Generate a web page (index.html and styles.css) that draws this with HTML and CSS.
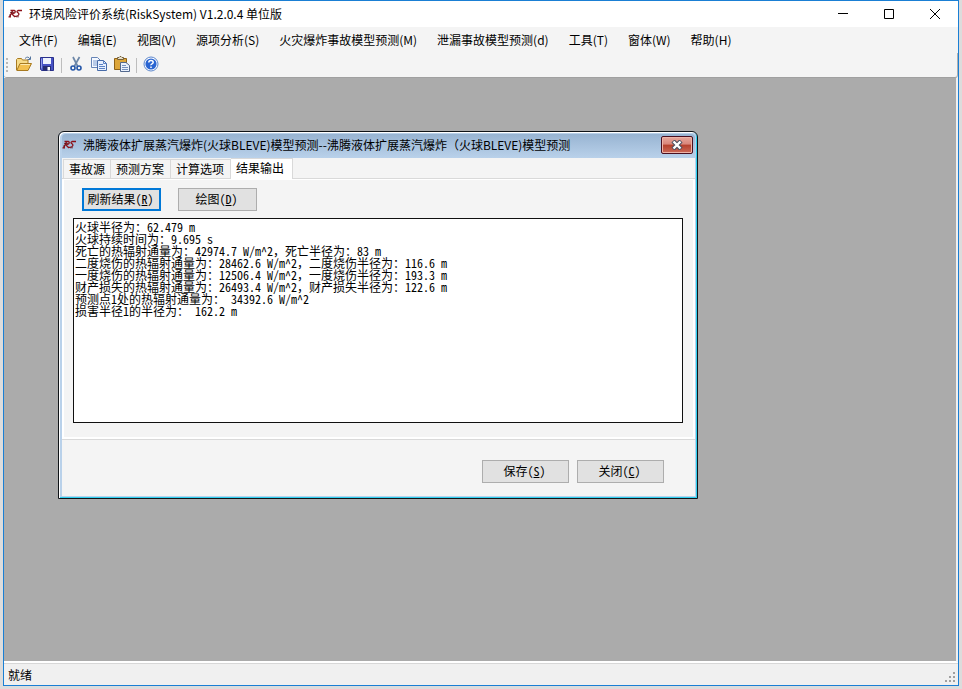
FILE: index.html
```html
<!DOCTYPE html>
<html lang="zh-CN">
<head>
<meta charset="utf-8">
<title>环境风险评价系统(RiskSystem) V1.2.0.4 单位版</title>
<link rel="stylesheet" href="styles.css">
</head>
<body>
<svg class="defs" aria-hidden="true">
  <symbol id="logo" viewBox="0 0 16 10">
    <path d="M2.500 1.500h4q1.500 .5 0 2.500L3.500 5M4.500 2L1.500 8M4 5l2.500 2.500M14 1.500h-4q-2 .8 0 2.300t-.3 3q-1.500 .8-3.700 .7M.5 7.800h2.500" fill="none" stroke="#8c1018" stroke-width="1.300"/>
    <path d="M2 3.500h4M8 7.800h3M1 6h2" stroke="#5a0810" stroke-width=".7"/>
  </symbol>
</svg>
<div class="window">
  <header class="titlebar">
    <svg class="logo"><use href="#logo"/></svg>
    <h1>环境风险评价系统(RiskSystem) V1.2.0.4 单位版</h1>
    <div class="caption">
      <button type="button" aria-label="最小化"><svg viewBox="0 0 10 10"><path d="M0 4.500h10"/></svg></button>
      <button type="button" aria-label="最大化"><svg viewBox="0 0 10 10"><path d="M.5 .5h9v9h-9z"/></svg></button>
      <button type="button" aria-label="关闭窗口"><svg viewBox="0 0 10 10"><path d="M0 0l10 10M10 0L0 10"/></svg></button>
    </div>
  </header>
  <nav class="menu">
    <button type="button">文件(F)</button>
    <button type="button">编辑(E)</button>
    <button type="button">视图(V)</button>
    <button type="button">源项分析(S)</button>
    <button type="button">火灾爆炸事故模型预测(M)</button>
    <button type="button">泄漏事故模型预测(d)</button>
    <button type="button">工具(T)</button>
    <button type="button">窗体(W)</button>
    <button type="button">帮助(H)</button>
  </nav>
  <div class="toolbar" role="toolbar">
    <span class="grip"></span>
    <button type="button" aria-label="打开"><svg viewBox="0 0 16 16">
      <path d="M.5 14V3.500l1-1h4l1 1.500h5.500v3" fill="#f7dc8a" stroke="#a87a20"/>
      <path d="M.8 14.500L4 7.500h11.500l-3.500 7z" fill="#f3c04e" stroke="#a87a20"/>
      <path d="M4.500 8.500h9.500" stroke="#fdeab0"/>
      <path d="M9 2.500q3-3 5 .5M14.500 .5v3h-3" fill="none" stroke="#53749e"/></svg></button>
    <button type="button" aria-label="保存文件"><svg viewBox="0 0 16 16">
      <path d="M1.500 1.500h13v13h-12l-1-1z" fill="#4652c4" stroke="#2a318c"/>
      <path d="M4 2h8v6H4z" fill="#eef2fd"/><path d="M2.500 2.500v10" stroke="#8f9ae8"/>
      <path d="M4 10h8v4.500H4z" fill="#252c70"/><path d="M8.500 11h2.500v3.500H8.500z" fill="#fff"/></svg></button>
    <span class="sep"></span>
    <button type="button" aria-label="剪切"><svg viewBox="0 0 16 16">
      <path d="M5 1l4.500 9M11.500 1L6.500 10" fill="none" stroke="#6d87a8" stroke-width="1.700"/>
      <circle cx="5" cy="12" r="2" fill="none" stroke="#2456a8" stroke-width="1.600"/>
      <circle cx="11" cy="12" r="2" fill="none" stroke="#2456a8" stroke-width="1.600"/></svg></button>
    <button type="button" aria-label="复制"><svg viewBox="0 0 16 16">
      <path d="M.5 1.500h6l3 3v7h-9z" fill="#f4f8ff" stroke="#6684b6"/><path d="M2 5h4M2 7h4M2 9h4" stroke="#7d9cd0"/>
      <path d="M6.500 4.500h6l3 3v7h-9z" fill="#e8f0fe" stroke="#476ba8"/><path d="M12.500 4.500v3h3M8 8.500h4M8 10.500h6M8 12.500h6" fill="none" stroke="#5c82c4"/></svg></button>
    <button type="button" aria-label="粘贴"><svg viewBox="0 0 16 16">
      <path d="M.5 2.500h12v11H.5z" fill="#dda63a" stroke="#8e6218"/><path d="M3.500 3.500h6v-2h-1.500L7 .5H6l-1 1H3.500z" fill="#e8e2cc" stroke="#76603a"/>
      <path d="M6.500 6.500h5.500l3.500 3v6h-9z" fill="#eaf1fd" stroke="#53698e"/><path d="M8 9.500h4M8 11.500h6M8 13.500h6" stroke="#7590bd"/></svg></button>
    <span class="sep"></span>
    <button type="button" aria-label="帮助"><svg viewBox="0 0 16 16">
      <circle cx="8" cy="8" r="7" fill="#fff" stroke="#5b86cc"/><circle cx="8" cy="8" r="5.600" fill="#2a65d2"/>
      <path d="M5.800 6.500q0-2 2.200-2t2.200 1.800q0 1-1.200 1.600t-1 1.400M8 10.500v1.500" fill="none" stroke="#fff" stroke-width="1.500"/></svg></button>
  </div>
  <main class="workspace">
    <section class="dialog" role="dialog" aria-labelledby="dialog-title">
      <header class="dialog-title">
        <svg class="logo"><use href="#logo"/></svg>
        <h2 id="dialog-title">沸腾液体扩展蒸汽爆炸(火球BLEVE)模型预测--沸腾液体扩展蒸汽爆炸（火球BLEVE)模型预测</h2>
        <button type="button" class="close" aria-label="关闭对话框"><svg viewBox="0 0 12 10"><path d="M2 1l8 8M10 1L2 9" stroke="#4a4f60" stroke-width="4.400"/><path d="M2.500 1.500l7 7M9.500 1.500l-7 7" stroke="#fff" stroke-width="2.400"/></svg></button>
      </header>
      <div class="dialog-body">
        <div class="tabs" role="tablist">
          <button type="button" role="tab">事故源</button>
          <button type="button" role="tab">预测方案</button>
          <button type="button" role="tab">计算选项</button>
          <button type="button" role="tab" id="tab-result" aria-selected="true">结果输出</button>
        </div>
        <div class="panel" role="tabpanel">
          <div class="actions">
            <button type="button" class="btn focus">刷新结果(<u>R</u>)</button>
            <button type="button" class="btn">绘图(<u>D</u>)</button>
          </div>
          <textarea class="result" aria-labelledby="tab-result" readonly spellcheck="false">火球半径为：62.479 m
火球持续时间为：9.695 s
死亡的热辐射通量为：42974.7 W/m^2，死亡半径为：83 m
二度烧伤的热辐射通量为：28462.6 W/m^2，二度烧伤半径为：116.6 m
一度烧伤的热辐射通量为：12506.4 W/m^2，一度烧伤半径为：193.3 m
财产损失的热辐射通量为：26493.4 W/m^2，财产损失半径为：122.6 m
预测点1处的热辐射通量为： 34392.6 W/m^2
损害半径1的半径为： 162.2 m</textarea>
        </div>
        <footer class="dialog-footer">
          <button type="button" class="btn wide">保存(<u>S</u>)</button>
          <button type="button" class="btn wide">关闭(<u>C</u>)</button>
        </footer>
      </div>
    </section>
  </main>
  <footer class="status">
    <span>就绪</span>
    <svg class="resize" viewBox="0 0 11 11" aria-hidden="true"><path d="M8 0h2v2H8zM4 4h2v2H4zM8 4h2v2H8zM0 8h2v2H0zM4 8h2v2H4zM8 8h2v2H8z"/></svg>
  </footer>
</div>
</body>
</html>
```
FILE: styles.css
```css
* { box-sizing: border-box; }

body {
  margin: 0;
  height: 100vh;
  padding: 0 3px 3px;
  background: #dcdcdc;
  color: #000;
  font: 12px/16px "Noto Sans CJK SC", sans-serif;
}

button { font: inherit; color: inherit; border: 0; padding: 0; background: none; white-space: nowrap; }
svg { display: block; flex: none; }
h1, h2 { margin: 0; font-size: 12px; font-weight: 400; line-height: 16px; white-space: nowrap; }
.defs { position: absolute; width: 0; height: 0; }

.window {
  display: flex;
  flex-direction: column;
  height: 100%;
  border: 1px solid #1a7fd4;
  background: #f4f4f4;
}

.titlebar { display: flex; align-items: center; height: 26px; padding-left: 4px; gap: 5px; background: #fff; }
.logo { width: 16px; height: 10px; }
.caption { display: flex; margin-left: auto; }
.caption button { display: grid; place-items: center; width: 46px; height: 26px; }
.caption svg { width: 10px; height: 10px; fill: none; stroke: #000; }

.menu { display: flex; height: 26px; padding-left: 5px; }
.menu button { padding: 0 10px; }

.toolbar {
  display: flex;
  align-items: center;
  height: 25px;
  padding: 0 2px;
  border-right: 1px solid #b0b0b0;
  border-bottom: 1px solid #a0a0a0;
  border-radius: 0 0 3px 3px;
}
.toolbar button { display: grid; place-items: center; width: 23px; height: 22px; padding-bottom: 2px; }
.toolbar svg { width: 16px; height: 16px; }
.grip { width: 2px; height: 14px; margin-right: 4px; background: repeating-linear-gradient(#b8b8b8 0 2px, transparent 2px 4px); }
.sep { width: 1px; height: 15px; margin: 0 2px 0 3px; background: #bdbdbd; }

.workspace {
  position: relative;
  flex: 1;
  background: #ababab;
  border-right: 2px solid #f0f0f0;
  border-bottom: 2px solid #fff;
}

.dialog {
  position: absolute;
  left: 54px;
  top: 53px;
  width: 640px;
  border: 1px solid #101418;
  border-radius: 6px 6px 0 0;
  background: #b9d1ea;
  box-shadow: inset 1px 1px #fff, inset -1px -1px #2cd0f0;
  padding: 2px 2px 2px 3px;
}
.dialog-title {
  display: flex;
  align-items: center;
  gap: 5px;
  height: 24px;
  padding: 0 2px 2px 0;
  background: linear-gradient(#98b4d2, #b9d1ea);
  border-radius: 4px 4px 0 0;
}
.close {
  display: grid;
  place-items: center;
  width: 32px;
  height: 18px;
  margin-left: auto;
  border: 1px solid #4a1020;
  border-radius: 2px;
  background: linear-gradient(#e8a89c, #d9857a 45%, #b5402c 50%, #cc6a58);
  box-shadow: inset 0 0 0 1px #eeb4a8;
}
.close svg { width: 12px; height: 10px; }

.dialog-body { background: #f4f4f4; }
.tabs { display: flex; align-items: flex-end; height: 21px; padding-left: 1px; border-bottom: 1px solid #d9d9d9; }
.tabs button {
  height: 19px;
  padding: 0 6px 0 5px;
  border: 1px solid #d9d9d9;
  border-bottom: 0;
  border-left-width: 0;
}
.tabs button:first-child { border-left-width: 1px; padding: 0 5px; }
.tabs button[aria-selected] {
  height: 21px;
  padding: 0 8px 2px 5px;
  margin-bottom: -1px;
  background: #fff;
}
.panel {
  padding: 8px 10px 14px 9px;
  border: solid #fff;
  border-width: 1px 2px 2px;
}
.actions { display: flex; gap: 17px; padding: 0 9px 7px; }
.btn {
  width: 79px;
  height: 23px;
  padding: 0 2px 2px 0;
  border: 1px solid #adadad;
  background: #e1e1e1;
  font-family: "Noto Sans Mono CJK SC", "Noto Sans CJK SC", monospace;
}
.btn.focus { border: 2px solid #0078d7; }
.btn.wide { width: 87px; }

.result {
  display: block;
  width: 100%;
  height: 205px;
  padding: 2px 1px;
  border: 1px solid #101010;
  border-radius: 0;
  outline: 0;
  resize: none;
  background: #fff;
  color: #000;
  font: 12px/12px "Noto Sans Mono CJK SC", "Noto Sans CJK SC", monospace;
}

.dialog-footer {
  display: flex;
  justify-content: flex-end;
  gap: 8px;
  padding: 20px 31px 13px;
  border-top: 1px solid #d9d9d9;
}

.status {
  display: flex;
  align-items: center;
  justify-content: space-between;
  height: 22px;
  padding: 0 2px 0 4px;
  border-top: 1px solid #d7d7d7;
  background: #f0f0f0;
}
.resize { width: 11px; height: 11px; margin-top: 6px; fill: #a0a0a0; }
```
